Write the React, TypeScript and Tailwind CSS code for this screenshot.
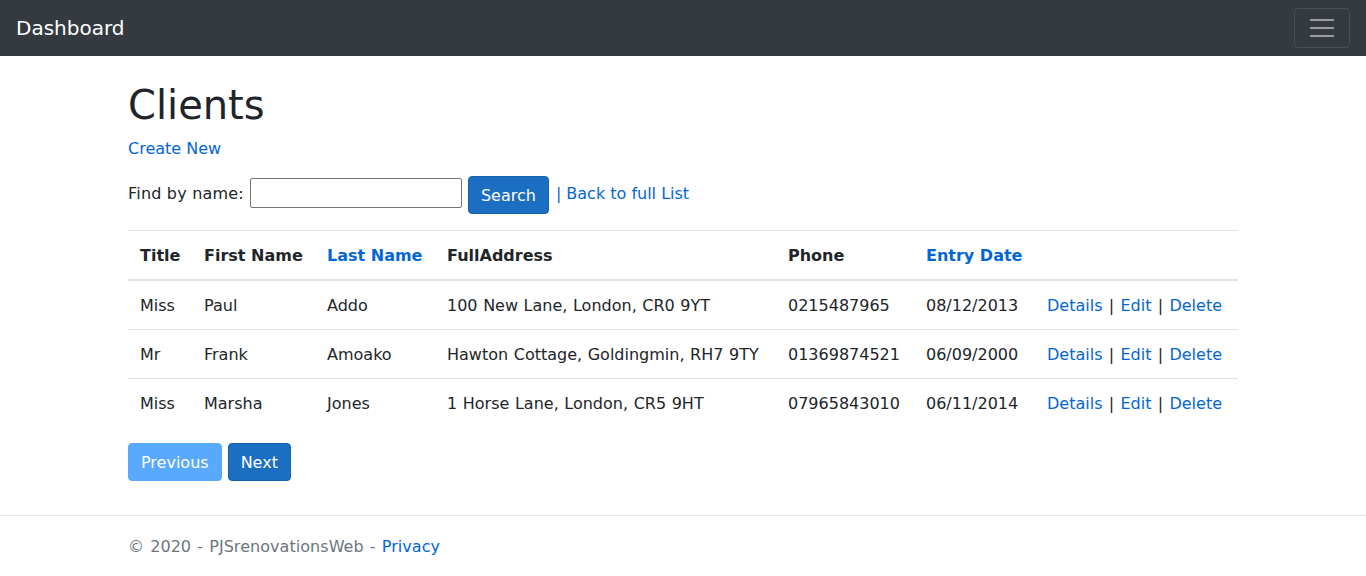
import React from "react";

const font = { fontFamily: '"DejaVu Sans", Verdana, sans-serif' };

const clients = [
  { title: "Miss", first: "Paul", last: "Addo", address: "100 New Lane, London, CR0 9YT", phone: "0215487965", date: "08/12/2013" },
  { title: "Mr", first: "Frank", last: "Amoako", address: "Hawton Cottage, Goldingmin, RH7 9TY", phone: "01369874521", date: "06/09/2000" },
  { title: "Miss", first: "Marsha", last: "Jones", address: "1 Horse Lane, London, CR5 9HT", phone: "07965843010", date: "06/11/2014" },
];

export default function App() {
  return (
    <div className="h-screen flex flex-col bg-white text-[#212529] text-base leading-6" style={font}>
      {/* Navbar */}
      <nav className="h-[56px] shrink-0 bg-[#343a40] flex items-center justify-between px-4">
        <a href="#" className="text-white text-xl leading-[30px]">Dashboard</a>
        <button className="w-[56px] h-[40px] border border-white/10 rounded flex flex-col items-center justify-center gap-[6px]">
          <span className="block w-[24px] h-[2px] bg-white/50" />
          <span className="block w-[24px] h-[2px] bg-white/50" />
          <span className="block w-[24px] h-[2px] bg-white/50" />
        </button>
      </nav>

      {/* Main */}
      <main className="flex-1 pt-[25px]">
        <div className="w-[1110px] mx-auto">
          <h1 className="text-[40px] leading-[48px] font-medium mb-[7px]">Clients</h1>
          <p className="pt-[1px] mb-[15px]">
            <a href="#" className="text-[#0366d6]">Create New</a>
          </p>

          <form className="mb-4 flex items-start h-[38px]">
            <span className="mt-[6px] tracking-[0.2px]">Find by name:</span>
            <input type="text" className="mt-[2px] ml-[6px] w-[212px] h-[30px] border border-[#767676] rounded-[2px] px-1" />
            <button type="button" className="ml-[6px] h-[38px] px-3 pt-[1px] bg-[#1b6ec2] border border-[#1861ac] text-white rounded">Search</button>
            <span className="mt-[6px] ml-[7px] text-[#0366d6]">|</span>
            <a href="#" className="mt-[6px] ml-[5px] text-[#0366d6]">Back to full List</a>
          </form>

          <table className="w-full table-fixed border-collapse mb-4">
            <thead>
              <tr className="border-t border-[#dee2e6] border-b-2">
                <th className="w-[64px] px-3 pt-[13px] pb-[11px] text-left font-bold">Title</th>
                <th className="w-[123px] px-3 pt-[13px] pb-[11px] text-left font-bold">First Name</th>
                <th className="w-[120px] px-3 pt-[13px] pb-[11px] text-left font-bold"><a href="#" className="text-[#0366d6]">Last Name</a></th>
                <th className="w-[341px] px-3 pt-[13px] pb-[11px] text-left font-bold">FullAddress</th>
                <th className="w-[138px] px-3 pt-[13px] pb-[11px] text-left font-bold">Phone</th>
                <th className="w-[121px] px-3 pt-[13px] pb-[11px] text-left font-bold"><a href="#" className="text-[#0366d6]">Entry Date</a></th>
                <th className="px-3 pt-[13px] pb-[11px]" />
              </tr>
            </thead>
            <tbody>
              {clients.map((c) => (
                <tr key={c.phone} className="border-t border-[#dee2e6]">
                  <td className="px-3 pt-[13px] pb-[11px]">{c.title}</td>
                  <td className="px-3 pt-[13px] pb-[11px]">{c.first}</td>
                  <td className="px-3 pt-[13px] pb-[11px]">{c.last}</td>
                  <td className="px-3 pt-[13px] pb-[11px] [word-spacing:0.5px]">{c.address}</td>
                  <td className="px-3 pt-[13px] pb-[11px]">{c.phone}</td>
                  <td className="px-3 pt-[13px] pb-[11px]">{c.date}</td>
                  <td className="px-3 pt-[13px] pb-[11px] whitespace-nowrap [word-spacing:1.2px]">
                    <a href="#" className="text-[#0366d6]">Details</a> |{" "}
                    <a href="#" className="text-[#0366d6]">Edit</a> |{" "}
                    <a href="#" className="text-[#0366d6]">Delete</a>
                  </td>
                </tr>
              ))}
            </tbody>
          </table>

          <div className="flex gap-[6px]">
            <a href="#" className="h-[38px] px-3 pt-[1px] flex items-center bg-[#59a9ff] border border-[#59a9ff] text-white rounded">Previous</a>
            <a href="#" className="h-[38px] px-3 pt-[1px] flex items-center bg-[#1b6ec2] border border-[#1861ac] text-white rounded">Next</a>
          </div>
        </div>
      </main>

      {/* Footer */}
      <footer className="shrink-0 border-t border-[#e5e5e5] pt-[2px] leading-[58px] text-[#6c757d] whitespace-nowrap">
        <div className="w-[1110px] mx-auto tracking-[0.05px] [word-spacing:1px]">
          © 2020 - PJSrenovationsWeb - <a href="#" className="text-[#0366d6]">Privacy</a>
        </div>
      </footer>
    </div>
  );
}
